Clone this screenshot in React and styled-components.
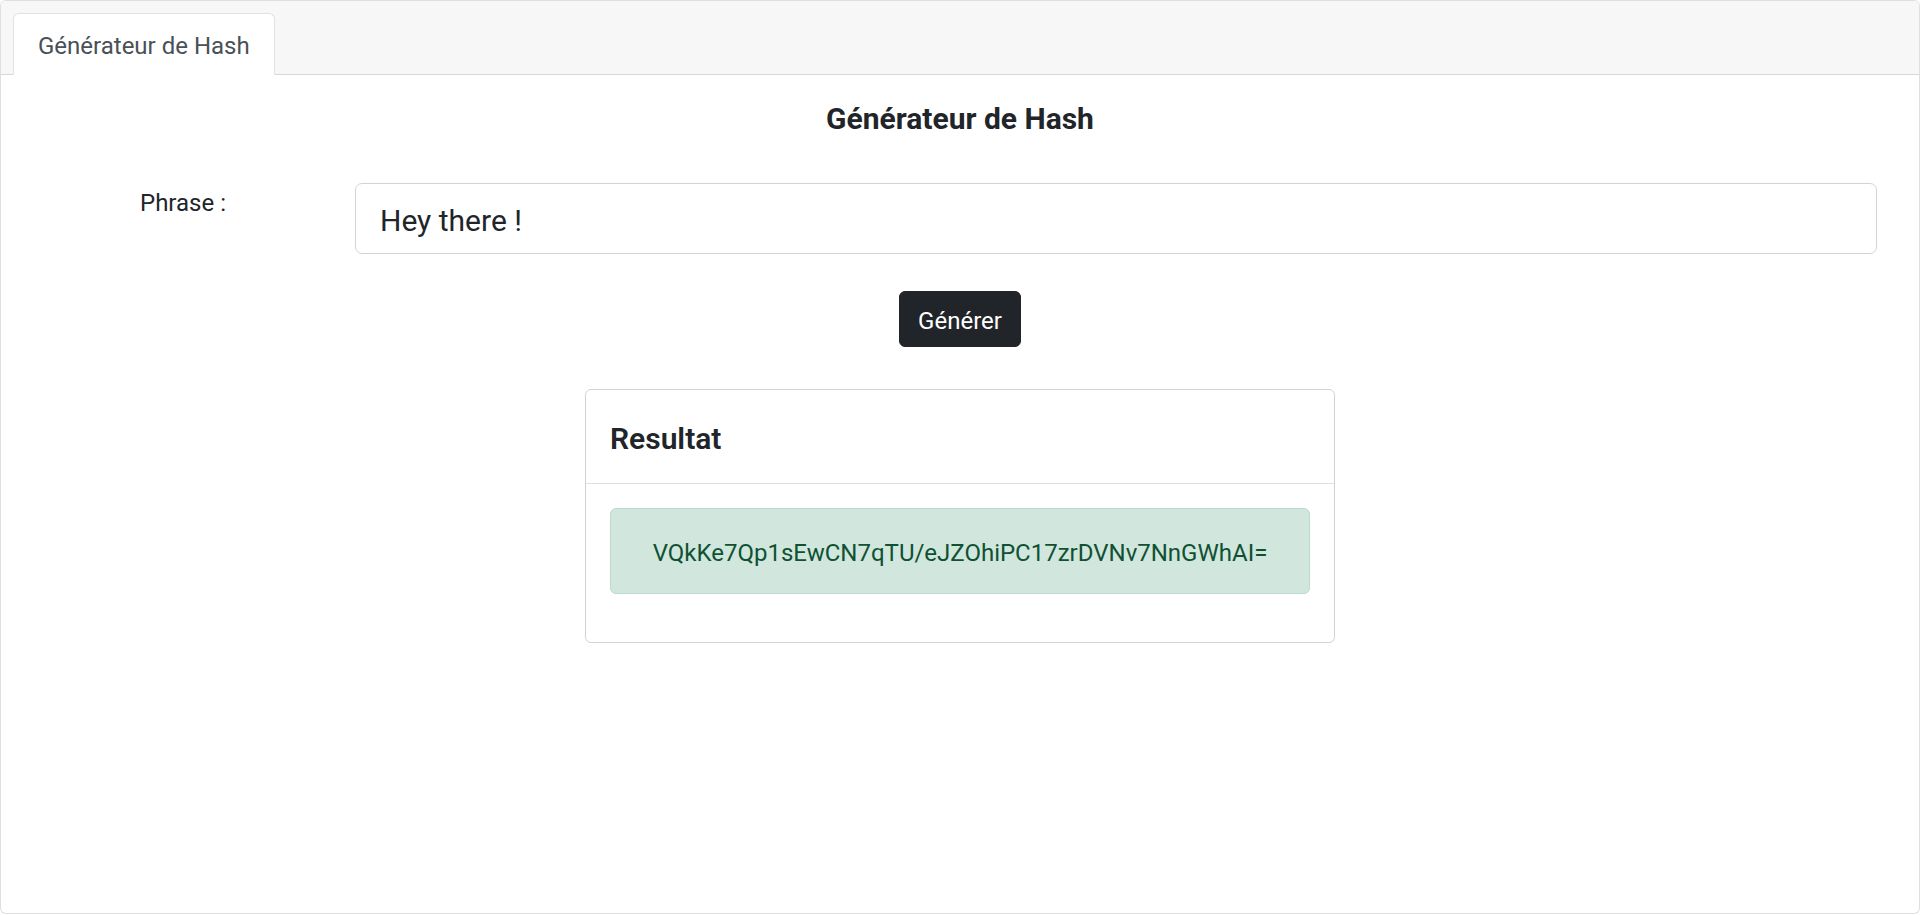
import React from "react";
import styled, { createGlobalStyle } from "styled-components";

const GlobalStyle = createGlobalStyle`
  *, *::before, *::after { box-sizing: border-box; }
  html, body { margin: 0; padding: 0; background: #fff; }
  body {
    font-family: "Segoe UI", Roboto, "Liberation Sans", Arial, sans-serif;
    color: #212529;
    font-size: 24px;
    line-height: 1.5;
  }
`;

const Card = styled.div`
  height: 914px;
  border: 1px solid rgba(0, 0, 0, 0.125);
  border-radius: 6px;
  display: flex;
  flex-direction: column;
  background: #fff;
  overflow: hidden;
`;

const CardHeader = styled.div`
  background: #f7f7f7;
  border-bottom: 1px solid rgba(0, 0, 0, 0.125);
  padding: 12px 12px 0;
`;

const TabList = styled.ul`
  display: flex;
  list-style: none;
  margin: 0 0 -1px;
  padding: 0;
`;

const Tab = styled.li`
  padding: 14px 24px 10px;
  line-height: 36px;
  font-size: 24px;
  color: ${(p) => (p.$active ? "#495057" : "#0d6efd")};
  background: ${(p) => (p.$active ? "#fff" : "transparent")};
  border: 1px solid ${(p) => (p.$active ? "#dee2e6" : "transparent")};
  border-bottom-color: ${(p) => (p.$active ? "#fff" : "transparent")};
  border-radius: 6px 6px 0 0;
`;

const Body = styled.div`
  padding: 24px;
  display: flex;
  flex-direction: column;
`;

const Title = styled.h5`
  margin: 0 0 48px;
  padding-top: 2px;
  height: 36px;
  font-size: 30px;
  line-height: 36px;
  font-weight: 700;
  text-align: center;
`;

const FormRow = styled.div`
  display: flex;
  align-items: flex-start;
  padding-right: 18px;
`;

const Label = styled.label`
  flex: 0 0 330px;
  padding: 2px 0 0 115px;
  font-size: 24px;
  line-height: 36px;
`;

const Input = styled.input`
  flex: 1;
  min-width: 0;
  height: 71px;
  padding: 14px 24px 10px;
  font: inherit;
  font-size: 30px;
  line-height: 45px;
  color: #212529;
  border: 1px solid #ced4da;
  border-radius: 7px;
  outline: none;
`;

const Actions = styled.div`
  display: flex;
  justify-content: center;
  margin-top: 37px;
`;

const Button = styled.button`
  font: inherit;
  font-size: 24px;
  line-height: 36px;
  padding: 11px 18px 7px;
  color: #fff;
  background: #212529;
  border: 1px solid #212529;
  border-radius: 6px;
  cursor: pointer;
`;

const ResultCard = styled.div`
  align-self: center;
  width: 750px;
  margin-top: 42px;
  border: 1px solid rgba(0, 0, 0, 0.175);
  border-radius: 6px;
`;

const ResultHeader = styled.h3`
  margin: 0;
  padding: 26px 24px 22px;
  font-size: 30px;
  line-height: 45px;
  font-weight: 600;
  border-bottom: 1px solid rgba(0, 0, 0, 0.125);
`;

const ResultBody = styled.div`
  padding: 24px;
`;

const Alert = styled.div`
  margin-bottom: 24px;
  padding: 26px 24px 22px;
  font-size: 24px;
  line-height: 36px;
  text-align: center;
  color: #0f5132;
  background: #d1e7dd;
  border: 1px solid #badbcc;
  border-radius: 6px;
`;

export default function App() {
  return (
    <>
      <GlobalStyle />
      <Card>
        <CardHeader>
          <TabList>
            <Tab $active>Générateur de Hash</Tab>
          </TabList>
        </CardHeader>
        <Body>
          <Title>Générateur de Hash</Title>
          <FormRow>
            <Label htmlFor="phrase">Phrase :</Label>
            <Input id="phrase" type="text" defaultValue="Hey there !" />
          </FormRow>
          <Actions>
            <Button type="button">Générer</Button>
          </Actions>
          <ResultCard>
            <ResultHeader>Resultat</ResultHeader>
            <ResultBody>
              <Alert>VQkKe7Qp1sEwCN7qTU/eJZOhiPC17zrDVNv7NnGWhAI=</Alert>
            </ResultBody>
          </ResultCard>
        </Body>
      </Card>
    </>
  );
}
